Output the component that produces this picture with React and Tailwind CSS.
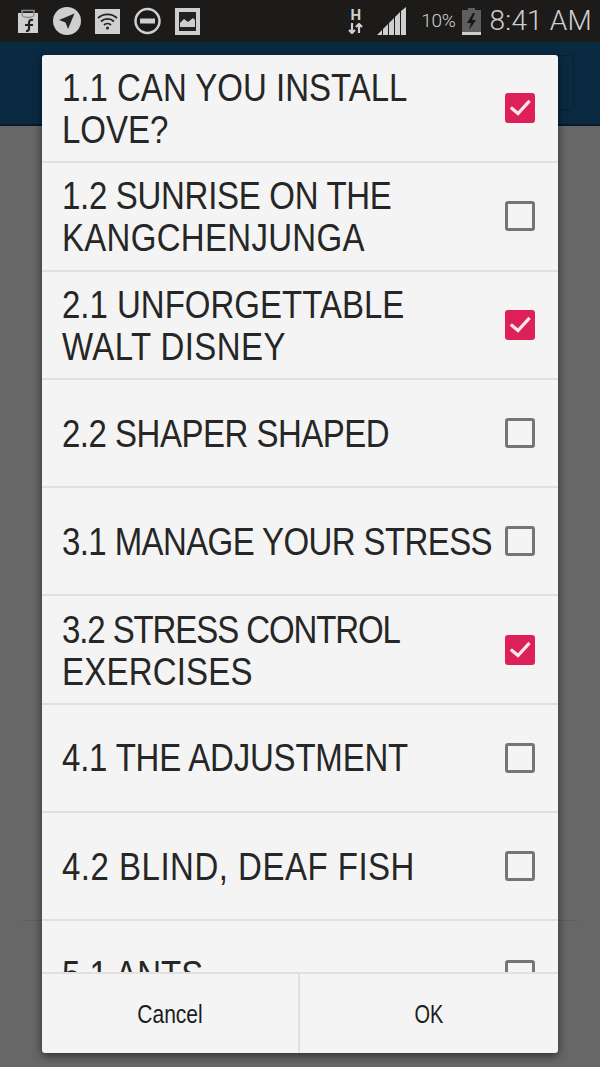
const rows = [
  { lines: [["1.1 CAN YOU INSTALL", 0], ["LOVE?", 0]], checked: true },
  { lines: [["1.2 SUNRISE ON THE", -0.3], ["KANGCHENJUNGA", 0.3]], checked: false },
  { lines: [["2.1 UNFORGETTABLE", 0], ["WALT DISNEY", 0.4]], checked: true },
  { lines: [["2.2 SHAPER SHAPED", -0.5]], checked: false },
  { lines: [["3.1 MANAGE YOUR STRESS", -0.6]], checked: false },
  { lines: [["3.2 STRESS CONTROL", -1.1], ["EXERCISES", 0.2]], checked: true },
  { lines: [["4.1 THE ADJUSTMENT", -0.2]], checked: false },
  { lines: [["4.2 BLIND, DEAF FISH", 0.5]], checked: false },
  { lines: [["5.1 ANTS", 0]], checked: false },
];

function Box({ checked }) {
  if (checked) {
    return (
      <div className="flex h-[30px] w-[30px] shrink-0 items-center justify-center rounded-[3px] bg-[#de2059]">
        <svg width="24" height="24" viewBox="0 0 24 24" fill="none" stroke="#f6e9ee" strokeWidth="3.2" strokeLinecap="square">
          <path d="M4 12.500l6 5L20.500 6" />
        </svg>
      </div>
    );
  }
  return <div className="h-[30px] w-[30px] shrink-0 rounded-[3px] border-[3px] border-[#757575]" />;
}

function StatusLeft() {
  return (
    <div className="flex items-center gap-[14px] pl-[17px]">
      <svg width="22" height="24" viewBox="0 0 22 24">
        <path d="M1 4h20v20H1z" fill="#cfcfcf" />
        <path d="M5 1.500h12v4a6 3 0 0 1-12 0z" fill="none" stroke="#8f8f8f" strokeWidth="1.500" />
        <path d="M8 16h8M16 11c-3-.6-4 .5-4 3v6c0 1.500-1 2-3 2" fill="none" stroke="#222" strokeWidth="2.200" />
      </svg>
      <svg width="28" height="28" viewBox="0 0 28 28">
        <circle cx="14" cy="14" r="14" fill="#cfcfcf" />
        <path d="M21.500 6.500L6 13l6.500 2.500L15 22z" fill="#222" />
      </svg>
      <svg width="25" height="25" viewBox="0 0 25 25">
        <rect width="25" height="25" fill="#cfcfcf" />
        <path d="M3 9a14 14 0 0 1 19 0M6 12.500a9.500 9.500 0 0 1 13 0M9 16a5 5 0 0 1 7 0" fill="none" stroke="#222" strokeWidth="1.800" />
        <circle cx="12.500" cy="19" r="1.500" fill="#222" />
      </svg>
      <svg width="27" height="28" viewBox="0 0 27 28">
        <circle cx="13.500" cy="14" r="12" fill="none" stroke="#cfcfcf" strokeWidth="2.500" />
        <rect x="6" y="11.500" width="15" height="5" fill="#cfcfcf" />
      </svg>
      <svg width="25" height="27" viewBox="0 0 25 27">
        <rect x="2" y="2" width="21" height="23" fill="#222" stroke="#cfcfcf" strokeWidth="4" />
        <path d="M5 19v-4l4-4 4 3 5-4 2 2v7z" fill="#cfcfcf" />
      </svg>
    </div>
  );
}

function StatusRight() {
  return (
    <div className="flex items-center pr-[8px] font-['Roboto',sans-serif]">
      <div className="mr-[14px] flex w-[15px] flex-col items-center">
        <span className="text-[15px] leading-[15px] font-bold text-[#cfcfcf]">H</span>
        <svg width="15" height="11" viewBox="0 0 15 11" fill="none" stroke="#cfcfcf" strokeWidth="2.200">
          <path d="M4 0v10M1 7l3 3 3-3M11 10V1M8 4l3-3 3 3" />
        </svg>
      </div>
      <svg className="mr-[14px]" width="30" height="28" viewBox="0 0 30 28" fill="#cfcfcf">
        <path d="M0 28L5 23V28zM6 22L11 17V28H6zM12 16L17 11V28H12zM18 10L23 5V28H18zM24 4L29 0V28H24z" />
      </svg>
      <span className="mr-[6px] text-[19px] font-light tracking-[-0.3px] text-[#cfcfcf]">10%</span>
      <svg className="mr-[9px]" width="19" height="27" viewBox="0 0 19 27">
        <path d="M6 0h7v2h6v25H0V2h6z" fill="#5e5e5e" />
        <rect y="24" width="19" height="3" fill="#cfcfcf" />
        <path d="M11 5L5 15h4l-2 7 7-10h-4l3-7z" fill="#161616" />
      </svg>
      <span className="text-[28px] font-light tracking-[0.2px] text-[#cfcfcf]">8:41 AM</span>
    </div>
  );
}

export default function App() {
  return (
    <div className="relative h-[1067px] w-[600px] overflow-hidden bg-[#676767] font-['Liberation_Sans',sans-serif]">
      <div className="flex h-[42px] items-center justify-between bg-[#1c1b1a]">
        <StatusLeft />
        <StatusRight />
      </div>
      <div className="flex h-[84px] items-start justify-end border-b-2 border-[#0a1a26] bg-[#0a2a42] pt-[13px] pr-[26px]">
        <div className="h-[55px] w-[60px] rounded-[4px] border border-[#0a1f30]" />
      </div>
      <div className="mx-[22px] mt-[794px] h-px bg-[#5e5e5e]" />

      <div className="absolute top-[55px] left-[42px] flex h-[998px] w-[516px] flex-col overflow-hidden rounded-[3px] bg-[#f4f4f4] shadow-[0_3px_10px_rgba(0,0,0,0.55)]">
        <div className="min-h-0 flex-1 overflow-hidden">
          {rows.map((r) => (
            <div
              key={r.lines[0][0]}
              className="flex h-[108.3px] items-center justify-between border-b-2 border-[#e0e0e0] pr-[23px] pl-[20px]"
            >
              <div className="origin-center scale-y-[1.2] text-[33px] leading-[35px] whitespace-nowrap text-[#262626]">
                {r.lines.map(([l, t]) => (
                  <div key={l} style={{ letterSpacing: t }}>{l}</div>
                ))}
              </div>
              <Box checked={r.checked} />
            </div>
          ))}
        </div>
        <div className="flex h-[81px] shrink-0 border-t-2 border-[#e0e0e0]">
          <div className="flex w-[258px] items-center justify-center border-r-2 border-[#e0e0e0] text-[#1c1c1c]">
            <span className="scale-y-[1.25] text-[21px]">Cancel</span>
          </div>
          <div className="flex flex-1 items-center justify-center text-[#1c1c1c]">
            <span className="scale-y-[1.25] text-[20px]">OK</span>
          </div>
        </div>
      </div>
    </div>
  );
}
